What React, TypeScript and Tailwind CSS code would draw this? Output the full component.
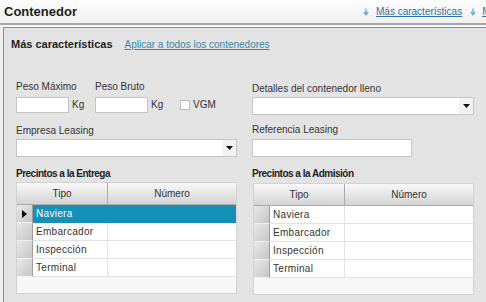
import React from 'react';

const rows = ['Naviera', 'Embarcador', 'Inspección', 'Terminal'];

const DownArrow = () => (
  <svg width="6" height="8" viewBox="0 0 6 8" className="shrink-0">
    <path d="M3 0.5v6M0.8 4l2.2 2.8L5.2 4" stroke="#6aa8d4" strokeWidth="1.3" fill="none" />
  </svg>
);

const Caret = () => (
  <svg width="7" height="4" viewBox="0 0 7 4">
    <path d="M0 0h7L3.5 4z" fill="#111" />
  </svg>
);

const Select = ({ width }: { width: string }) => (
  <div className={`flex h-[18px] ${width} items-stretch border border-[#c4c4c4] bg-white`}>
    <div className="flex-1" />
    <div className="flex w-[14px] items-center justify-center bg-[#f3f3f3]">
      <Caret />
    </div>
  </div>
);

const SealGrid = ({ selected }: { selected?: boolean }) => (
  <div className="flex h-[112px] w-[221px] flex-col border border-[#d2d2d2] bg-[#f7f7f7] text-[10px] text-[#333]">
    <div className="flex h-[22px] shrink-0">
      <div className="flex w-[91px] items-center justify-center border-r border-b border-[#aaaaaa] bg-gradient-to-b from-[#f8f8f8] to-[#d4d4d4]">
        Tipo
      </div>
      <div className="flex flex-1 items-center justify-center border-b border-[#aaaaaa] bg-gradient-to-b from-[#f8f8f8] to-[#d4d4d4]">
        Número
      </div>
    </div>
    {rows.map((r, i) => {
      const sel = selected && i === 0;
      return (
        <div key={r} className="flex h-[18px] shrink-0">
          <div className="flex w-[16px] items-center justify-center border-r border-b border-r-[#9c9c9c] border-b-[#efefef] bg-gradient-to-br from-[#e8e8e8] to-[#c6c6c6]">
            {sel && (
              <svg width="5" height="8" viewBox="0 0 5 8">
                <path d="M0 0l5 4-5 4z" fill="#000" />
              </svg>
            )}
          </div>
          <div
            className={
              sel
                ? 'flex w-[75px] items-center bg-[#1590b6] pl-[3px] tracking-[0.3px] text-white'
                : 'flex w-[75px] items-center border-r border-b border-[#e3e3e3] bg-white pl-[3px] tracking-[0.3px]'
            }
          >
            {r}
          </div>
          <div className={sel ? 'flex-1 bg-[#1590b6]' : 'flex-1 border-b border-[#e3e3e3] bg-white'} />
        </div>
      );
    })}
  </div>
);

export default function App() {
  return (
    <div
      className="flex h-[302px] w-[486px] flex-col overflow-hidden bg-[#eeeeee] text-[#333]"
      style={{ fontFamily: '"Liberation Sans", Arial, sans-serif' }}
    >
      <div className="flex h-[23px] shrink-0 items-center bg-gradient-to-b from-[#fdfdfd] to-[#f0f0f0]">
        <div className="w-[363px] shrink-0 pl-[4px] text-[13px] font-bold text-[#1e1e1e]">Contenedor</div>
        <div className="flex items-center whitespace-nowrap text-[10px]">
          <DownArrow />
          <span className="ml-[7px] text-[#2f6fa6] underline">Más características</span>
          <span className="ml-[8px]">
            <DownArrow />
          </span>
          <span className="ml-[6px] text-[#2f6fa6] underline">Más</span>
        </div>
      </div>
      <div className="h-[2px] shrink-0 bg-[#a6a6a6]" />
      <div className="h-[2px] shrink-0 bg-[#f6f6f6]" />

      <div className="ml-[3px] flex-1 border-l border-t border-[#8f8f8f] bg-[#e3e3e3] pt-[9px]">
        <div className="flex h-[14px] items-center gap-[12px] pl-[7px]">
          <span className="text-[11px] font-bold text-[#1e1e1e]">Más características</span>
          <span className="text-[10px] text-[#3389a8] underline">Aplicar a todos los contenedores</span>
        </div>

        <div className="mt-[30px] flex gap-[15px] pl-[12px] text-[10px] leading-[12px]">
          {/* left column */}
          <div className="flex w-[221px] flex-col">
            <div className="flex items-start">
              <div className="w-[79px]">
                <div className="h-[12px]">Peso Máximo</div>
                <div className="mt-[4px] flex items-center">
                  <div className="h-[16px] w-[53px] border border-[#c4c4c4] bg-white" />
                  <span className="ml-[3px]">Kg</span>
                </div>
              </div>
              <div className="w-[85px]">
                <div className="h-[12px]">Peso Bruto</div>
                <div className="mt-[4px] flex items-center">
                  <div className="h-[16px] w-[53px] border border-[#c4c4c4] bg-white" />
                  <span className="ml-[3px]">Kg</span>
                </div>
              </div>
              <div className="mt-[16px] flex h-[16px] items-center">
                <div className="h-[10px] w-[10px] border border-[#bdbdbd] bg-white" />
                <span className="ml-[3px]">VGM</span>
              </div>
            </div>
            <div className="mt-[12px] h-[12px]">Empresa Leasing</div>
            <div className="mt-[2px]">
              <Select width="w-[221px]" />
            </div>
            <div className="mt-[11px] h-[12px] font-bold tracking-[-0.5px] text-[#1e1e1e]">Precintos a la Entrega</div>
            <div className="mt-[2px]">
              <SealGrid selected />
            </div>
          </div>

          {/* right column */}
          <div className="flex w-[222px] flex-col">
            <div className="mt-[2px] h-[12px]">Detalles del contenedor lleno</div>
            <div className="mt-[2px]">
              <Select width="w-[222px]" />
            </div>
            <div className="mt-[9px] h-[12px]">Referencia Leasing</div>
            <div className="mt-[3px] h-[18px] w-[160px] border border-[#c4c4c4] bg-white" />
            <div className="mt-[11px] h-[12px] font-bold tracking-[-0.5px] text-[#1e1e1e]">Precintos a la Admisión</div>
            <div className="mt-[3px] pl-[1px]">
              <SealGrid />
            </div>
          </div>
        </div>
      </div>
    </div>
  );
}
